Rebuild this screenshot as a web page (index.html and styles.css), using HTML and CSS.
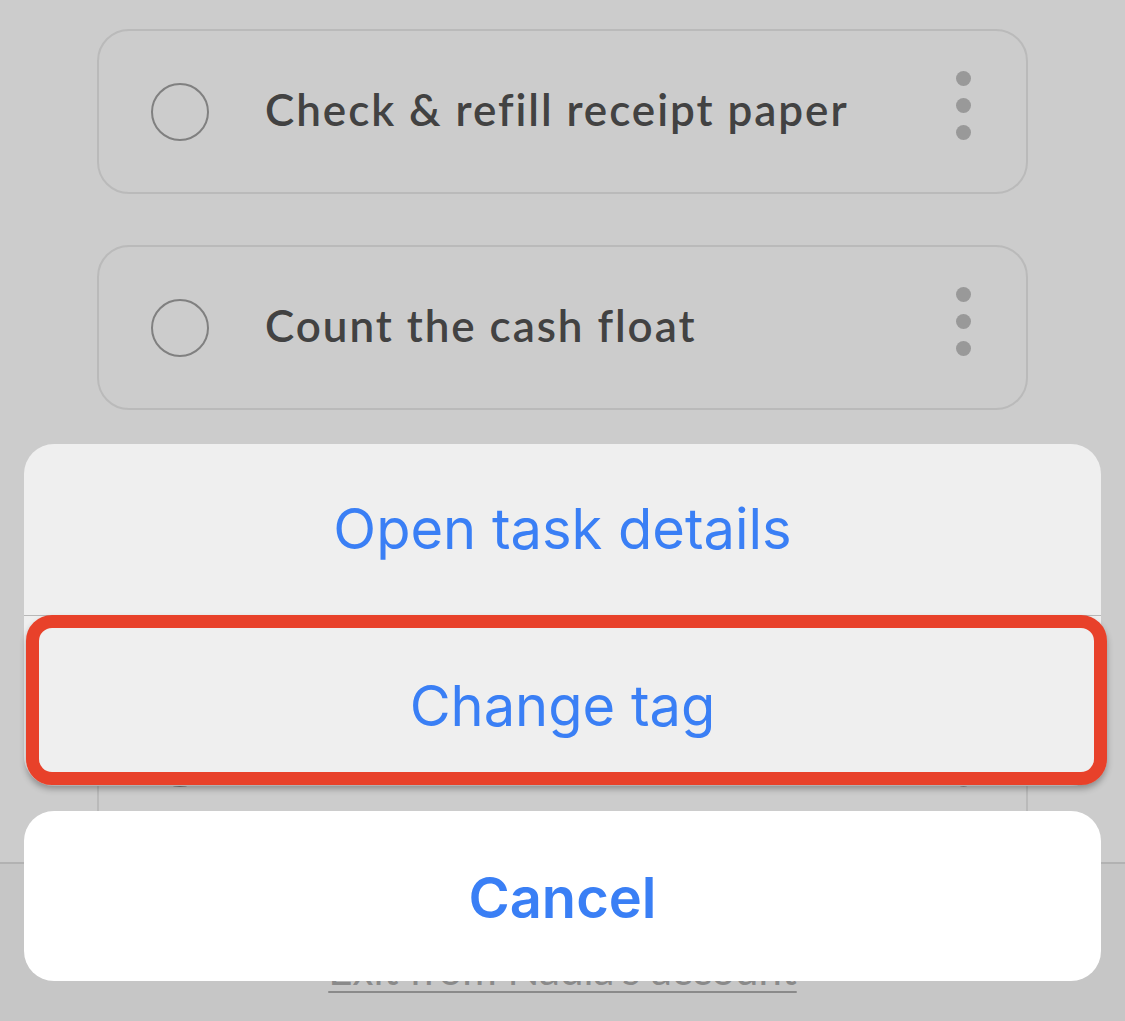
FILE: index.html
```html
<!DOCTYPE html>
<html lang="en">
<head>
  <meta charset="UTF-8">
  <meta name="viewport" content="width=device-width, initial-scale=1.0">
  <title>Tasks</title>
  <link rel="stylesheet" href="styles.css">
</head>
<body>
  <div class="page">
    <!-- Task list -->
    <div class="task-list">
      <div class="task">
        <span class="check"></span>
        <span class="task-title">Check &amp; refill receipt paper</span>
        <span class="more"><i></i><i></i><i></i></span>
      </div>
      <div class="task">
        <span class="check"></span>
        <span class="task-title">Count the cash float</span>
        <span class="more"><i></i><i></i><i></i></span>
      </div>
      <div class="task task-tall">
        <span class="check"></span>
        <span class="task-title"></span>
        <span class="more"><i></i><i></i><i></i></span>
      </div>
    </div>

    <!-- Footer -->
    <div class="footer">
      <a class="exit-link" href="#">Exit from Nadia's account</a>
    </div>
  </div>

  <!-- Action sheet -->
  <div class="sheet">
    <div class="sheet-group">
      <button class="sheet-btn">Open task details</button>
      <button class="sheet-btn">Change tag</button>
      <div class="highlight"></div>
    </div>
    <button class="sheet-btn sheet-cancel">Cancel</button>
  </div>
</body>
</html>
```

FILE: styles.css
```css
/* General */
body {
  margin: 0;
  height: 1021px;
  overflow: hidden;
  background: #cccccc;
  font-family: Lato, "Open Sans", sans-serif;
}

.page {
  position: relative;
  height: 100%;
}

/* Task list */
.task-list {
  display: flex;
  flex-direction: column;
  gap: 51px;
  padding: 29px 97px 0;
}

.task {
  display: flex;
  align-items: center;
  height: 165px;
  box-sizing: border-box;
  padding: 0 55px 0 52px;
  border: 2px solid #bababa;
  border-radius: 32px;
}

.task-tall {
  height: 594px;
}

.check {
  width: 58px;
  height: 58px;
  box-sizing: border-box;
  border: 2px solid #808080;
  border-radius: 50%;
  flex-shrink: 0;
}

.task-title {
  flex: 1;
  margin-left: 56px;
  margin-bottom: 6px;
  font-size: 44px;
  font-weight: 600;
  letter-spacing: 1.95px;
  color: #424242;
  white-space: nowrap;
}

.more {
  display: flex;
  flex-direction: column;
  gap: 12px;
  margin-bottom: 12px;
}

.more i {
  display: block;
  width: 15px;
  height: 15px;
  border-radius: 50%;
  background: #999999;
}

/* Footer */
.footer {
  position: absolute;
  left: 0;
  right: 0;
  bottom: 0;
  height: 157px;
  background: #c6c6c6;
  border-top: 2px solid #b2b2b2;
  text-align: center;
}

.exit-link {
  display: inline-block;
  margin-top: 80px;
  font-size: 42px;
  color: #8a8a8a;
  text-decoration: underline;
  text-decoration-thickness: 2px;
  text-underline-offset: 6px;
}

/* Action sheet */
.sheet {
  position: absolute;
  left: 24px;
  right: 24px;
  bottom: 40px;
  display: flex;
  flex-direction: column;
  gap: 25px;
  font-family: Inter, Roboto, sans-serif;
}

.sheet-group {
  position: relative;
  background: #efefef;
  border-radius: 30px;
}

.sheet-btn {
  display: block;
  width: 100%;
  height: 171px;
  border: none;
  background: transparent;
  font-family: inherit;
  font-size: 56px;
  color: #3a7ff5;
  padding: 0 0 2px;
}

.sheet-btn + .sheet-btn {
  border-top: 1px solid #b8b8b8;
  padding: 10px 0 0;
}

.sheet-cancel {
  height: 170px;
  background: #ffffff;
  border-radius: 30px;
  font-weight: 600;
  padding: 4px 0 0;
}

/* Screenshot annotation over "Change tag" */
.highlight {
  position: absolute;
  left: 2px;
  right: -6px;
  top: 171px;
  height: 170px;
  box-sizing: border-box;
  border: 13px solid #e8412a;
  border-radius: 26px;
  box-shadow: 0 4px 6px rgba(0, 0, 0, 0.3);
}
```
